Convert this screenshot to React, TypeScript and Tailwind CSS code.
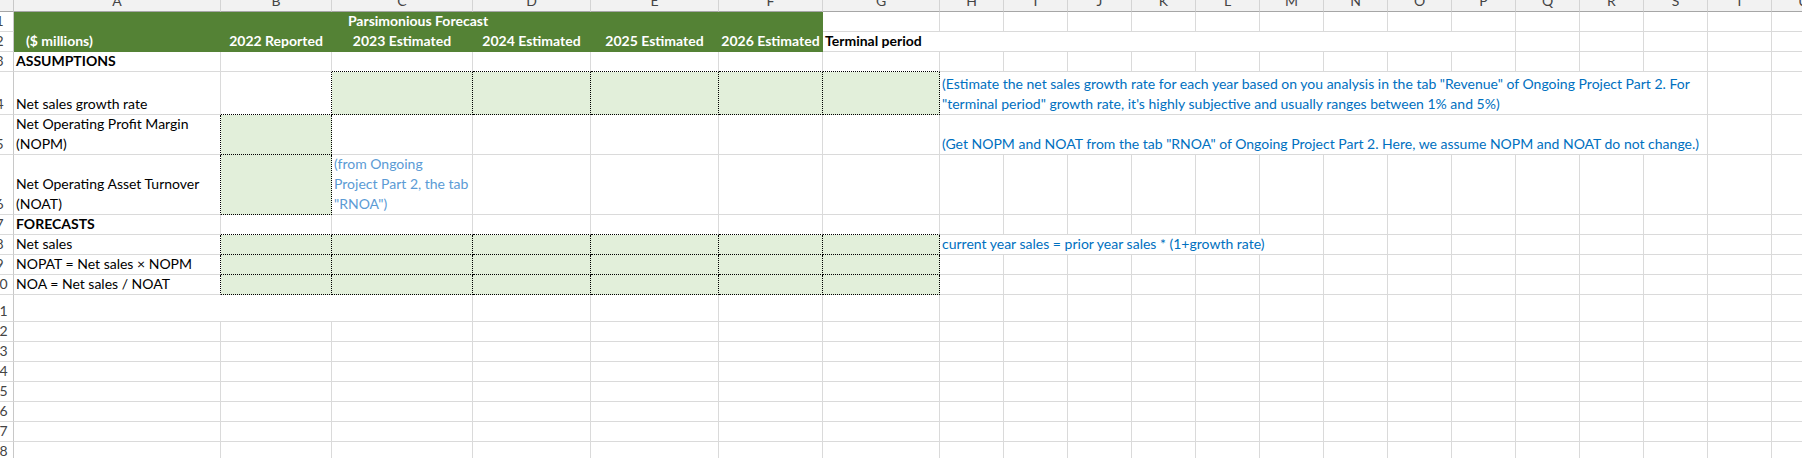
import type { ReactNode } from "react";

const letters = "ABCDEFGHIJKLMNOPQRSTU".split("");

// cell border flavours
const GRID = "border-r border-b border-[#dadada]";
const DOT_R = "border-r-black [border-right-style:dotted]";
const DOT_B = "border-b-black [border-bottom-style:dotted]";
const FILL = "bg-[#e2efda]";
const HEAD = "border-r border-b border-[#548235] bg-[#548235] text-white font-bold";
const NOTE = "text-[#0070c0] pl-[2px]";

function Cell({ className = GRID, children }: { className?: string; children?: ReactNode }) {
  return (
    <div className={`flex items-end leading-[20px] whitespace-nowrap ${className}`}>
      {children}
    </div>
  );
}

function Blank({ count, className = GRID }: { count: number; className?: string }) {
  return (
    <>
      {Array.from({ length: count }, (_, i) => (
        <Cell key={i} className={className} />
      ))}
    </>
  );
}

function RowHead({ n }: { n: number }) {
  return (
    <div className="flex items-end overflow-hidden border-r border-b border-r-[#c8c8c8] border-b-[#dadada] bg-white leading-[20px] text-[#444]">
      <span className="-ml-[14px] w-[27px] shrink-0 text-center">{n}</span>
    </div>
  );
}

export default function App() {
  return (
    <div className="h-[458px] w-[1802px] overflow-hidden bg-white font-['Lato','Liberation_Sans',sans-serif] text-[14px] text-black">
      <div className="grid w-max grid-cols-[14px_207px_111px_141px_118px_128px_104px_117px_repeat(14,64px)] grid-rows-[12px_20px_20px_20px_43px_40px_60px_20px_20px_20px_20px_27px_repeat(7,20px)]">
        {/* column letters */}
        <div className="border-r border-b border-r-[#c8c8c8] border-b-[#a6a6a6] bg-[#f2f2f2]" />
        {letters.map((l) => (
          <div
            key={l}
            className="overflow-hidden border-r border-b border-r-[#d4d4d4] border-b-[#a6a6a6] bg-[#f2f2f2] text-center text-[#444]"
          >
            <div className="-mt-[9px] leading-[20px]">{l}</div>
          </div>
        ))}

        {/* row 1 */}
        <RowHead n={1} />
        <Cell className={`col-span-6 justify-center ${HEAD}`}>Parsimonious Forecast</Cell>
        <Blank count={15} />

        {/* row 2 */}
        <RowHead n={2} />
        <Cell className={`pl-[12px] ${HEAD}`}>($ millions)</Cell>
        <Cell className={`justify-center ${HEAD}`}>2022 Reported</Cell>
        <Cell className={`justify-center ${HEAD}`}>2023 Estimated</Cell>
        <Cell className={`justify-center ${HEAD}`}>2024 Estimated</Cell>
        <Cell className={`justify-center ${HEAD}`}>2025 Estimated</Cell>
        <Cell className={`justify-center ${HEAD}`}>2026 Estimated</Cell>
        <Cell className={`col-span-10 pl-[2px] font-bold ${GRID}`}>Terminal period</Cell>
        <Blank count={5} />

        {/* row 3 */}
        <RowHead n={3} />
        <Cell className={`pl-[2px] font-bold ${GRID}`}>ASSUMPTIONS</Cell>
        <Cell />
        <Blank count={5} className={`${GRID} ${DOT_B}`} />
        <Blank count={14} />

        {/* row 4 */}
        <RowHead n={4} />
        <Cell className={`pl-[2px] ${GRID}`}>Net sales growth rate</Cell>
        <Cell className={`${GRID} ${DOT_R} ${DOT_B}`} />
        <Blank count={5} className={`${GRID} ${DOT_R} ${DOT_B} ${FILL}`} />
        <Cell className={`col-span-12 ${NOTE} ${GRID}`}>
          <div>
            (Estimate the net sales growth rate for each year based on you analysis in the tab "Revenue" of Ongoing Project Part 2. For
            <br />
            "terminal period" growth rate, it's highly subjective and usually ranges between 1% and 5%)
          </div>
        </Cell>
        <Blank count={2} />

        {/* row 5 */}
        <RowHead n={5} />
        <Cell className={`pl-[2px] ${GRID} ${DOT_R}`}>
          <div>
            Net Operating Profit Margin
            <br />
            (NOPM)
          </div>
        </Cell>
        <Cell className={`${GRID} ${DOT_R} ${DOT_B} ${FILL}`} />
        <Blank count={5} />
        <Cell className={`col-span-12 ${NOTE} ${GRID}`}>
          (Get NOPM and NOAT from the tab "RNOA" of Ongoing Project Part 2. Here, we assume NOPM and NOAT do not change.)
        </Cell>
        <Blank count={2} />

        {/* row 6 */}
        <RowHead n={6} />
        <Cell className={`pl-[2px] ${GRID} ${DOT_R}`}>
          <div>
            Net Operating Asset Turnover
            <br />
            (NOAT)
          </div>
        </Cell>
        <Cell className={`${GRID} ${DOT_R} ${DOT_B} ${FILL}`} />
        <Cell className={`pl-[2px] text-[#5b9bd5] ${GRID}`}>
          <div>
            (from Ongoing
            <br />
            Project Part 2, the tab
            <br />
            "RNOA")
          </div>
        </Cell>
        <Blank count={18} />

        {/* row 7 */}
        <RowHead n={7} />
        <Cell className={`pl-[2px] font-bold ${GRID}`}>FORECASTS</Cell>
        <Blank count={6} className={`${GRID} ${DOT_B}`} />
        <Blank count={14} />

        {/* row 8 */}
        <RowHead n={8} />
        <Cell className={`pl-[2px] ${GRID} ${DOT_R}`}>Net sales</Cell>
        <Blank count={6} className={`${GRID} ${DOT_R} ${DOT_B} ${FILL}`} />
        <Cell className={`col-span-6 ${NOTE} ${GRID}`}>
          current year sales = prior year sales * (1+growth rate)
        </Cell>
        <Blank count={8} />

        {/* row 9 */}
        <RowHead n={9} />
        <Cell className={`pl-[2px] ${GRID} ${DOT_R}`}>NOPAT = Net sales × NOPM</Cell>
        <Blank count={6} className={`${GRID} ${DOT_R} ${DOT_B} ${FILL}`} />
        <Blank count={14} />

        {/* row 10 */}
        <RowHead n={10} />
        <Cell className={`pl-[2px] ${GRID} ${DOT_R}`}>NOA = Net sales / NOAT</Cell>
        <Blank count={6} className={`${GRID} ${DOT_R} ${DOT_B} ${FILL}`} />
        <Blank count={14} />

        {/* row 11 */}
        <RowHead n={11} />
        <Cell className={`col-span-3 ${GRID}`} />
        <Blank count={18} />

        {/* rows 12-18 */}
        {[12, 13, 14, 15, 16, 17, 18].map((n) => (
          <div key={n} className="contents">
            <RowHead n={n} />
            <Blank count={21} />
          </div>
        ))}
      </div>
    </div>
  );
}
